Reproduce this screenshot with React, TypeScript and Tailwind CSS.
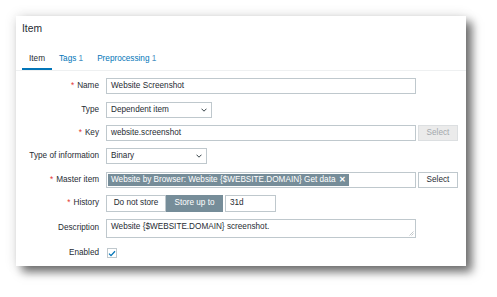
import { ReactNode } from 'react';

const Label = ({ children, required }: { children: ReactNode; required?: boolean }) => (
  <div className="w-[90px] shrink-0 text-right pr-[7px] text-[#1f2c33] leading-none whitespace-nowrap">
    {required && <span className="text-[#e33734] mr-[3px]">*</span>}
    {children}
  </div>
);

const Chevron = () => (
  <svg width="6" height="4" viewBox="0 0 6 4" className="shrink-0">
    <polyline points="0.5,0.7 3,3.2 5.5,0.7" fill="none" stroke="#1f2c33" strokeWidth="0.9" />
  </svg>
);

const Row = ({ className, children }: { className: string; children: ReactNode }) => (
  <div className={`flex items-center ${className}`}>{children}</div>
);

const App = () => {
  return (
    <div className="w-[497px] h-[297px] bg-white pt-4 pl-4 font-['Liberation_Sans',Arial,sans-serif] text-[8.2px]">
      <div className="w-[450px] h-[250px] bg-white shadow-[6px_6px_9px_rgba(0,0,0,0.55),0_0_12px_rgba(0,0,0,0.12)]">
        <div className="pl-[6px] pt-[8px] h-[26px] text-[10.3px] text-[#1f2c33] leading-none">Item</div>

        <div className="flex items-end h-[29px] pl-[6px] border-b border-[#eef0f1]">
          <div className="flex flex-col items-center w-[30px]">
            <span className="text-[#1f2c33] leading-none">Item</span>
            <div className="mt-[5px] h-[2px] w-full bg-[#0275b8]" />
          </div>
          <div className="ml-[7px] pb-[7px] text-[#0275b8] leading-none">
            Tags <span className="text-[#4a8fc0]">1</span>
          </div>
          <div className="ml-[14px] pb-[7px] text-[#0275b8] leading-none">
            Preprocessing <span className="text-[#4a8fc0]">1</span>
          </div>
        </div>

        <div className="flex flex-col">
          <Row className="mt-[7px] h-[16px]">
            <Label required>Name</Label>
            <div className="w-[310px] h-[16px] border border-[#bfc8cd] pl-[4px] flex items-center text-[#1f2c33]">
              Website Screenshot
            </div>
          </Row>

          <Row className="mt-[8px] h-[16px]">
            <Label>Type</Label>
            <div className="w-[106px] h-[16px] border border-[#bfc8cd] pl-[4px] pr-[4px] flex items-center justify-between text-[#1f2c33]">
              <span>Dependent item</span>
              <Chevron />
            </div>
          </Row>

          <Row className="mt-[7px] h-[16px]">
            <Label required>Key</Label>
            <div className="w-[310px] h-[16px] border border-[#bfc8cd] pl-[4px] flex items-center text-[#1f2c33]">
              website.screenshot
            </div>
            <div className="ml-[2px] w-[40px] h-[16px] border border-[#dcdfe1] bg-[#ebebeb] text-[#a3a8ab] flex items-center justify-center">
              Select
            </div>
          </Row>

          <Row className="mt-[7px] h-[16px]">
            <Label>Type of information</Label>
            <div className="w-[101px] h-[16px] border border-[#bfc8cd] pl-[4px] pr-[4px] flex items-center justify-between text-[#1f2c33]">
              <span>Binary</span>
              <Chevron />
            </div>
          </Row>

          <Row className="mt-[8px] h-[16px]">
            <Label required>Master item</Label>
            <div className="w-[310px] h-[16px] border border-[#bfc8cd] pl-[1px] flex items-center">
              <div className="h-[12px] bg-[#768d99] text-white pl-[3px] pr-[3px] flex items-center whitespace-nowrap">
                Website by Browser: Website {'{$WEBSITE.DOMAIN}'} Get data
                <span className="ml-[3px] font-bold text-[8px]">✕</span>
              </div>
            </div>
            <div className="ml-[2px] w-[40px] h-[16px] border border-[#bfc8cd] bg-white text-[#1f2c33] flex items-center justify-center">
              Select
            </div>
          </Row>

          <Row className="mt-[7px] h-[17px]">
            <Label required>History</Label>
            <div className="flex h-[17px]">
              <div className="w-[60px] border border-[#bfc8cd] bg-white text-[#1f2c33] flex items-center justify-center">
                Do not store
              </div>
              <div className="w-[57px] border border-[#768d99] bg-[#768d99] text-white flex items-center justify-center">
                Store up to
              </div>
            </div>
            <div className="ml-[2px] w-[51px] h-[17px] border border-[#bfc8cd] pl-[4px] flex items-center text-[#1f2c33]">
              31d
            </div>
          </Row>

          <Row className="mt-[7px] h-[19px]">
            <Label>Description</Label>
            <div className="relative w-[310px] h-[19px] border border-[#bfc8cd] pl-[4px] pt-[3px] text-[#1f2c33] leading-none">
              Website {'{$WEBSITE.DOMAIN}'} screenshot.
              <svg width="5" height="5" viewBox="0 0 5 5" className="absolute right-[1px] bottom-[1px]">
                <line x1="4.5" y1="0.5" x2="0.5" y2="4.5" stroke="#9aa3a8" strokeWidth="0.6" />
                <line x1="4.5" y1="2.5" x2="2.5" y2="4.5" stroke="#9aa3a8" strokeWidth="0.6" />
              </svg>
            </div>
          </Row>

          <Row className="mt-[7px] h-[16px]">
            <Label>Enabled</Label>
            <div className="ml-[1px] w-[10px] h-[10px] border border-[#bfc8cd] bg-white flex items-center justify-center">
              <svg width="8" height="7" viewBox="0 0 8 7">
                <polyline points="1,3.6 3,5.6 7,1.2" fill="none" stroke="#0275b8" strokeWidth="1.3" />
              </svg>
            </div>
          </Row>
        </div>
      </div>
    </div>
  );
};

export default App;
